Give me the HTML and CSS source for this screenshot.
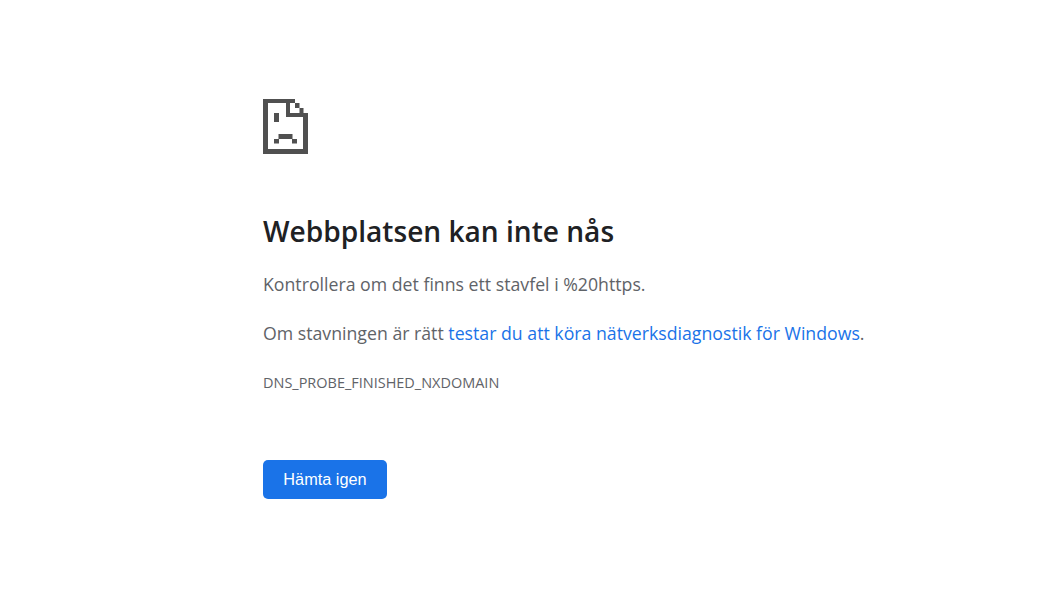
FILE: index.html
```html
<!DOCTYPE html>
<html lang="sv">
<head>
<meta charset="utf-8">
<title>Webbplatsen kan inte nås</title>
<link rel="stylesheet" href="styles.css">
</head>
<body>
<main class="page">
  <svg class="icon" width="45" height="55" viewBox="0 0 45 55" aria-hidden="true">
    <path class="ink" fill-rule="evenodd" d="M0 0H32V4H27V14H40V14H45V55H0ZM5 4V50H40V18H23V4Z"/>
    <rect class="ink" x="32" y="4" width="4.5" height="5"/>
    <rect class="ink" x="36.5" y="9" width="4" height="5"/>
    <rect class="ink" x="11" y="14" width="5" height="9"/>
    <rect class="ink" x="15.5" y="35" width="14" height="5"/>
    <rect class="ink" x="11" y="40" width="5" height="4.5"/>
    <rect class="ink" x="29" y="40" width="5" height="4.5"/>
  </svg>
  <h1 class="title">Webbplatsen kan inte nås</h1>
  <p class="text first">Kontrollera om det finns ett stavfel i %20https.</p>
  <p class="text second">Om stavningen är rätt <a class="link" href="#">testar du att köra nätverksdiagnostik för Windows</a>.</p>
  <div class="code">DNS_PROBE_FINISHED_NXDOMAIN</div>
  <button class="reload" type="button">Hämta igen</button>
</main>
</body>
</html>
```
FILE: styles.css
```css
html, body { margin: 0; padding: 0; background: #fff; }
.page {
  display: flex;
  flex-direction: column;
  align-items: flex-start;
  padding: 99px 0 0 263px;
  font-family: "Open Sans", "Noto Sans", sans-serif;
}
.icon { display: block; }
.ink { fill: #505050; }
.title {
  margin: 60px 0 0;
  font-size: 28.1px;
  line-height: 35px;
  font-weight: 600;
  color: #202124;
}
.text {
  margin: 0;
  font-size: 17.72px;
  line-height: 25px;
  color: #5f6368;
  white-space: nowrap;
}
.first { margin-top: 23px; }
.second { margin-top: 24px; }
.link { color: #1a73e8; text-decoration: none; }
.code {
  margin-top: 28px;
  font-size: 14.47px;
  line-height: 18px;
  color: #5f6368;
}
.reload {
  margin-top: 68px;
  width: 124px;
  height: 39px;
  padding: 0;
  border: 0;
  border-radius: 5px;
  background: #1a73e8;
  color: #fff;
  font-family: "Liberation Sans", Arial, sans-serif;
  font-size: 16.3px;
}
```
